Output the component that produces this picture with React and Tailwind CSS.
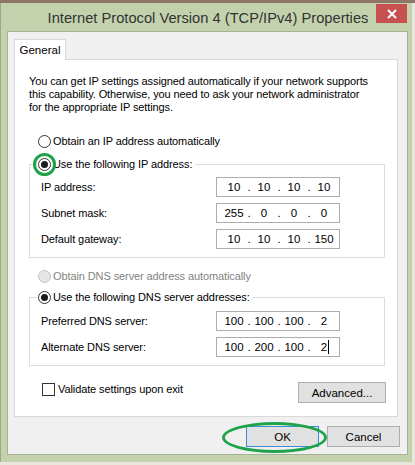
import React from 'react';

const font = { fontFamily: '"Liberation Sans", Arial, sans-serif' };

const Radio = ({ checked, disabled }) => (
  <span
    className={`flex h-[13px] w-[13px] shrink-0 items-center justify-center rounded-full border ${
      disabled ? 'border-[#c2c2c2] bg-[#e6e6e6]' : 'border-[#333333] bg-white'
    }`}
  >
    {checked && <span className="h-[7px] w-[7px] rounded-full bg-[#1c1c1c]" />}
  </span>
);

const IpField = ({ parts, caret }) => (
  <div className="flex h-[20px] w-[124px] items-center border border-[#adadad] bg-white pl-[5px] text-[11.5px] tracking-normal text-black">
    {parts.map((p, i) => (
      <React.Fragment key={i}>
        {i > 0 && <span className="w-[6px] text-center">.</span>}
        <span className="relative w-[24px] text-center">
          {p}
          {caret && i === parts.length - 1 && (
            <span className="absolute left-[16px] top-[0px] h-[14px] w-px bg-black" />
          )}
        </span>
      </React.Fragment>
    ))}
  </div>
);

const FieldRow = ({ label, parts, caret }) => (
  <div className="flex items-center">
    <span className="w-[175px]">{label}</span>
    <IpField parts={parts} caret={caret} />
  </div>
);

const Button = ({ children, className }) => (
  <div
    className={`flex h-[21px] items-center justify-center border bg-[#e1e1e1] text-[11.5px] tracking-normal text-black ${className}`}
  >
    {children}
  </div>
);

export default function App() {
  return (
    <div className="h-[465px] w-[415px] overflow-hidden bg-[#e8e6dc]" style={font}>
      <div className="h-[3px] w-full bg-[#8f7566]" />
      <div className="flex h-[459px] w-[412px] flex-col border-l border-[#9aa98a] bg-[#c3d2ad]">
        {/* Title bar */}
        <div className="grid h-[28px] grid-cols-[39px_1fr_36px] items-start">
          <div />
          <div className="pt-[7px] text-center text-[14.7px] leading-[17px] text-[#333333]">
            Internet Protocol Version 4 (TCP/IPv4) Properties
          </div>
          <div className="mt-[1px] flex h-[19px] w-[31px] items-center justify-center bg-[#c75050]">
            <svg width="10" height="10" viewBox="0 0 10 10">
              <path d="M1 1L9 9M9 1L1 9" stroke="white" strokeWidth="2" />
            </svg>
          </div>
        </div>

        {/* Client area */}
        <div className="ml-[6px] flex h-[424px] w-[401px] flex-col border border-[#a3b292] bg-[#f0f0f0] pl-[6px] pt-[7px] text-[11px] leading-[14px] tracking-[-0.1px] text-black">
          <div className="relative z-10 -mb-px flex h-[21px] w-[52px] items-center justify-center border border-b-0 border-[#d9d9d9] bg-white text-[11.5px] tracking-normal">
            General
          </div>
          <div className="flex h-[358px] w-[384px] flex-col border border-[#d9d9d9] bg-white">
            <p className="ml-[14px] mt-[15px] leading-[13px]">
              You can get IP settings assigned automatically if your network supports
              <br />
              this capability. Otherwise, you need to ask your network administrator
              <br />
              for the appropriate IP settings.
            </p>

            <div className="ml-[23px] mt-[20px] flex h-[14px] items-center gap-[2px]">
              <Radio />
              <span>Obtain an IP address automatically</span>
            </div>

            <fieldset className="ml-[14px] mt-[9px] w-[356px] border border-[#dcdcdc] pb-[8px]">
              <legend className="ml-[7px] flex h-[14px] items-center gap-[2px] pl-px pr-[3px]">
                <span className="relative">
                  <Radio checked />
                  <span className="absolute left-[-5px] top-[-5px] h-[23px] w-[23px] rounded-full border-[3px] border-[#1fa34a]" />
                </span>
                <span>Use the following IP address:</span>
              </legend>
              <div className="ml-[11px] mt-[6px] flex flex-col gap-[6px]">
                <FieldRow label="IP address:" parts={['10', '10', '10', '10']} />
                <FieldRow label="Subnet mask:" parts={['255', '0', '0', '0']} />
                <FieldRow label="Default gateway:" parts={['10', '10', '10', '150']} />
              </div>
            </fieldset>

            <div className="ml-[23px] mt-[11px] flex h-[14px] items-center gap-[2px] text-[#838383]">
              <Radio disabled />
              <span>Obtain DNS server address automatically</span>
            </div>

            <fieldset className="ml-[14px] mt-[7px] w-[356px] border border-[#dcdcdc] pb-[8px]">
              <legend className="ml-[7px] flex h-[14px] items-center gap-[2px] pl-px pr-[3px]">
                <Radio checked />
                <span>Use the following DNS server addresses:</span>
              </legend>
              <div className="ml-[11px] mt-[7px] flex flex-col gap-[6px]">
                <FieldRow label="Preferred DNS server:" parts={['100', '100', '100', '2']} />
                <FieldRow label="Alternate DNS server:" parts={['100', '200', '100', '2']} caret />
              </div>
            </fieldset>

            <div className="mt-[16px] flex items-start justify-between pl-[27px] pr-[11px]">
              <div className="flex h-[14px] items-center gap-[3px]">
                <span className="h-[13px] w-[13px] border border-[#333333] bg-white" />
                <span>Validate settings upon exit</span>
              </div>
              <Button className="w-[88px] border-[#adadad]">Advanced...</Button>
            </div>
          </div>

          {/* Dialog buttons */}
          <div className="mr-[7px] mt-[9px] flex justify-end gap-[8px]">
            <div className="relative">
              <Button className="w-[73px] border-[#3c8dd6]">OK</Button>
              <span className="absolute left-[-24px] top-[-4px] h-[31px] w-[105px] rounded-[50%] border-[3px] border-[#1fa34a]" />
            </div>
            <Button className="w-[73px] border-[#adadad]">Cancel</Button>
          </div>
        </div>
      </div>
    </div>
  );
}
